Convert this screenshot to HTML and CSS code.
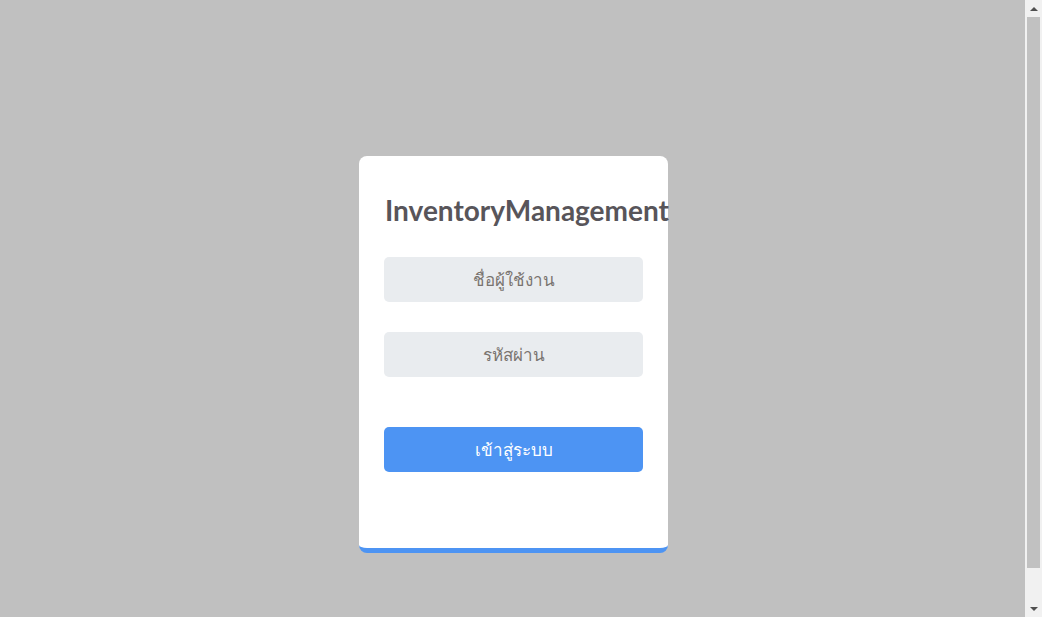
FILE: index.html
```html
<!DOCTYPE html>
<html lang="th">
<head>
<meta charset="utf-8">
<title>InventoryManagement</title>
<link rel="stylesheet" href="styles.css">
</head>
<body>
<div class="page">
  <form class="card">
    <h1 class="title">InventoryManagement</h1>
    <input class="field" type="text" placeholder="ชื่อผู้ใช้งาน">
    <input class="field" type="password" placeholder="รหัสผ่าน">
    <button class="submit" type="button">เข้าสู่ระบบ</button>
  </form>
</div>
<div class="scrollbar" aria-hidden="true">
  <div class="arrow arrow-up"></div>
  <div class="track"><div class="thumb"></div></div>
  <div class="arrow arrow-down"></div>
</div>
</body>
</html>
```

FILE: styles.css
```css
html, body {
  margin: 0;
  padding: 0;
  background: #c0c0c0;
}
body {
  padding-right: 17px;
}
.page {
  display: flex;
  justify-content: center;
  padding: 156px 0 100px 2px;
  font-family: "Noto Sans", "DejaVu Sans", sans-serif;
}
.card {
  box-sizing: border-box;
  width: 309px;
  height: 397px;
  background: #fff;
  border-radius: 8px;
  border-bottom: 5px solid #4d94f3;
  padding: 36px 25px 0;
  display: flex;
  flex-direction: column;
}
.title {
  margin: 0 0 29px;
  padding-left: 1px;
  font-family: Lato, sans-serif;
  font-weight: 700;
  font-size: 28px;
  line-height: 36px;
  color: #58555a;
  white-space: nowrap;
}
.field {
  box-sizing: border-box;
  height: 45px;
  margin: 0 0 30px;
  border: none;
  border-radius: 5px;
  background: #e9ecef;
  text-align: center;
  font-family: inherit;
  font-size: 17px;
  outline: none;
}
.field::placeholder {
  color: #7a7470;
}
.submit {
  height: 45px;
  margin-top: 20px;
  border: none;
  border-radius: 5px;
  background: #4d94f3;
  color: #fff;
  font-family: inherit;
  font-size: 17px;
}
.scrollbar {
  position: fixed;
  top: 0;
  right: 0;
  width: 17px;
  height: 100vh;
  background: #f1f1f1;
  display: flex;
  flex-direction: column;
}
.arrow {
  height: 17px;
  display: flex;
  align-items: center;
  justify-content: center;
}
.arrow::before {
  content: "";
  width: 0;
  height: 0;
  border-left: 4px solid transparent;
  border-right: 4px solid transparent;
}
.arrow-up::before {
  border-bottom: 4px solid #505050;
}
.arrow-down::before {
  border-top: 4px solid #505050;
}
.track {
  flex: 1;
  padding: 0 2px 32px;
}
.thumb {
  height: 100%;
  background: #c1c1c1;
}
```
